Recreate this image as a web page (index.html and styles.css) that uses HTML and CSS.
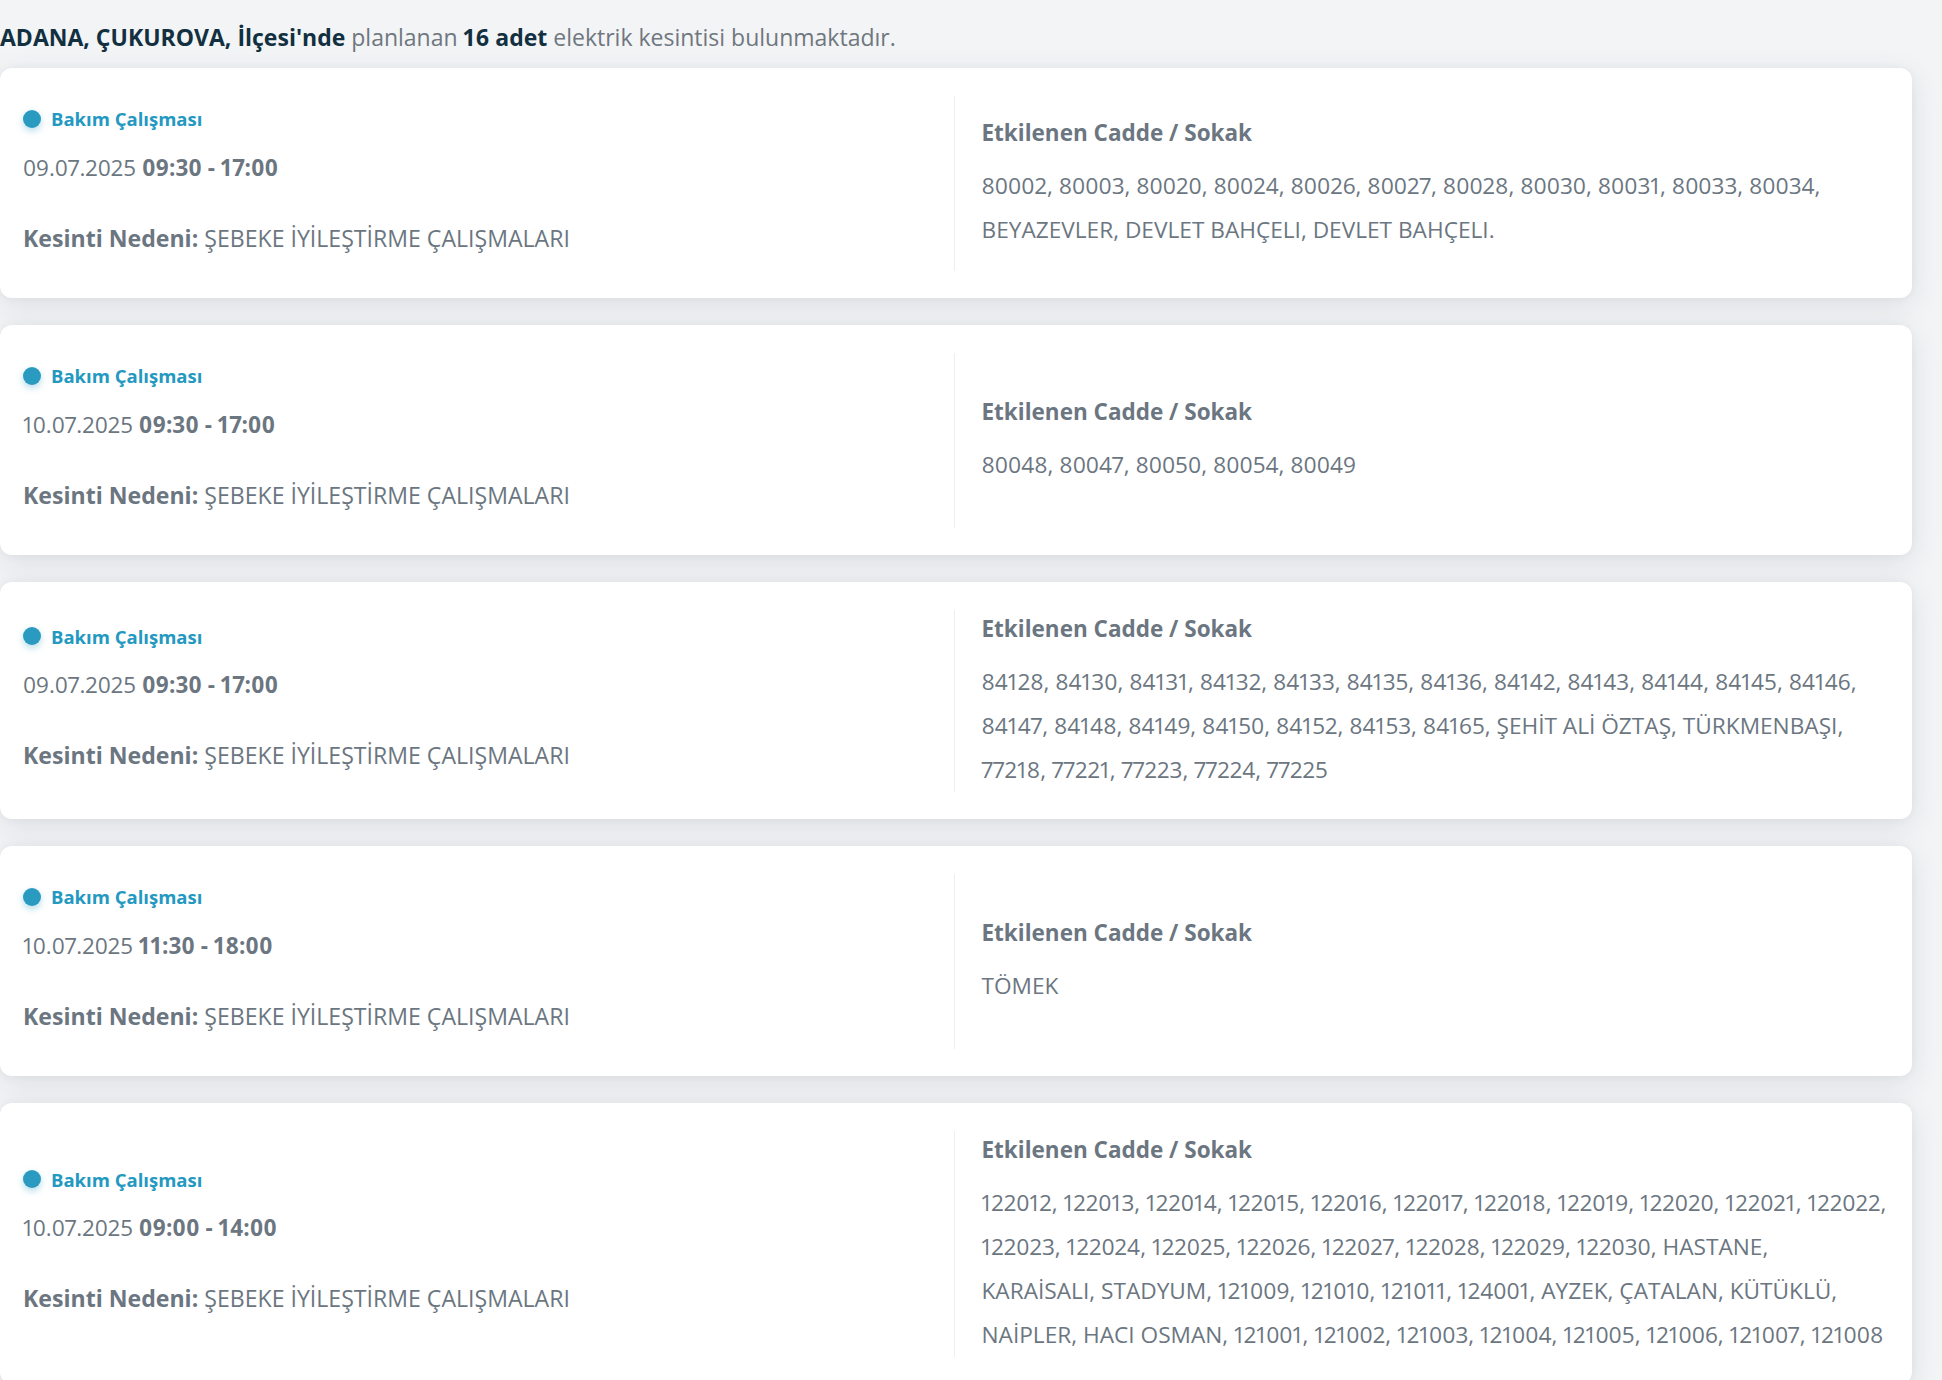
FILE: index.html
```html
<!DOCTYPE html>
<html lang="tr">
<head>
<meta charset="utf-8">
<title>Planlı Kesintiler</title>
<link rel="stylesheet" href="styles.css">
</head>
<body>
<main class="page">
  <p class="summary"><strong>ADANA, ÇUKUROVA, İlçesi'nde</strong> planlanan <strong>16 adet</strong> elektrik kesintisi bulunmaktadır.</p>

  <section class="outage-list">
    <article class="outage-card">
      <div class="outage-info">
        <div class="outage-type"><span class="dot"></span>Bakım Çalışması</div>
        <div class="outage-date">09.07.2025 <strong>09:30 - 17:00</strong></div>
        <div class="outage-reason"><strong>Kesinti Nedeni:</strong> ŞEBEKE İYİLEŞTİRME ÇALIŞMALARI</div>
      </div>
      <div class="outage-streets">
        <h3 class="streets-title">Etkilenen Cadde / Sokak</h3>
        <p class="streets-text">80002, 80003, 80020, 80024, 80026, 80027, 80028, 80030, 80031, 80033, 80034, BEYAZEVLER, DEVLET BAHÇELI, DEVLET BAHÇELI.</p>
      </div>
    </article>

    <article class="outage-card">
      <div class="outage-info">
        <div class="outage-type"><span class="dot"></span>Bakım Çalışması</div>
        <div class="outage-date">10.07.2025 <strong>09:30 - 17:00</strong></div>
        <div class="outage-reason"><strong>Kesinti Nedeni:</strong> ŞEBEKE İYİLEŞTİRME ÇALIŞMALARI</div>
      </div>
      <div class="outage-streets">
        <h3 class="streets-title">Etkilenen Cadde / Sokak</h3>
        <p class="streets-text">80048, 80047, 80050, 80054, 80049</p>
      </div>
    </article>

    <article class="outage-card">
      <div class="outage-info">
        <div class="outage-type"><span class="dot"></span>Bakım Çalışması</div>
        <div class="outage-date">09.07.2025 <strong>09:30 - 17:00</strong></div>
        <div class="outage-reason"><strong>Kesinti Nedeni:</strong> ŞEBEKE İYİLEŞTİRME ÇALIŞMALARI</div>
      </div>
      <div class="outage-streets">
        <h3 class="streets-title">Etkilenen Cadde / Sokak</h3>
        <p class="streets-text">84128, 84130, 84131, 84132, 84133, 84135, 84136, 84142, 84143, 84144, 84145, 84146, 84147, 84148, 84149, 84150, 84152, 84153, 84165, ŞEHİT ALİ ÖZTAŞ, TÜRKMENBAŞI, 77218, 77221, 77223, 77224, 77225</p>
      </div>
    </article>

    <article class="outage-card">
      <div class="outage-info">
        <div class="outage-type"><span class="dot"></span>Bakım Çalışması</div>
        <div class="outage-date">10.07.2025 <strong>11:30 - 18:00</strong></div>
        <div class="outage-reason"><strong>Kesinti Nedeni:</strong> ŞEBEKE İYİLEŞTİRME ÇALIŞMALARI</div>
      </div>
      <div class="outage-streets">
        <h3 class="streets-title">Etkilenen Cadde / Sokak</h3>
        <p class="streets-text">TÖMEK</p>
      </div>
    </article>

    <article class="outage-card">
      <div class="outage-info">
        <div class="outage-type"><span class="dot"></span>Bakım Çalışması</div>
        <div class="outage-date">10.07.2025 <strong>09:00 - 14:00</strong></div>
        <div class="outage-reason"><strong>Kesinti Nedeni:</strong> ŞEBEKE İYİLEŞTİRME ÇALIŞMALARI</div>
      </div>
      <div class="outage-streets">
        <h3 class="streets-title">Etkilenen Cadde / Sokak</h3>
        <p class="streets-text">122012, 122013, 122014, 122015, 122016, 122017, 122018, 122019, 122020, 122021, 122022, 122023, 122024, 122025, 122026, 122027, 122028, 122029, 122030, HASTANE, KARAİSALI, STADYUM, 121009, 121010, 121011, 124001, AYZEK, ÇATALAN, KÜTÜKLÜ, NAİPLER, HACI OSMAN, 121001, 121002, 121003, 121004, 121005, 121006, 121007, 121008</p>
      </div>
    </article>
  </section>
</main>
</body>
</html>
```
FILE: styles.css
```css
html, body {
  margin: 0;
  padding: 0;
}

body {
  background: #f3f4f6;
  font-family: "Open Sans", "Noto Sans", sans-serif;
  font-feature-settings: "pnum" 1;
  color: #6b7681;
  overflow: hidden;
}

.page {
  width: 1912px;
}

.summary {
  margin: 0;
  padding: 22px 0 16px 0;
  font-size: 23px;
  line-height: 30px;
  color: #6f7780;
  white-space: nowrap;
}

.summary strong {
  color: #12303f;
  font-weight: 700;
}

.outage-list {
  display: flex;
  flex-direction: column;
  gap: 27px;
}

.outage-card {
  display: grid;
  grid-template-columns: 931px 1fr;
  padding: 27.5px 23px;
  background: #ffffff;
  border-radius: 12px;
  box-shadow: 0 8px 30px rgba(30, 40, 60, 0.10), 0 0 10px rgba(30, 40, 60, 0.04);
}

.outage-info {
  align-self: center;
  padding: 8px 0 17px 0;
}

.outage-type {
  display: flex;
  align-items: center;
  height: 30px;
  font-size: 18.5px;
  font-weight: 700;
  color: #2399c1;
}

.dot {
  flex: none;
  width: 18px;
  height: 18px;
  border-radius: 50%;
  background: #2a9ac0;
  margin-right: 10px;
  box-shadow: 0 3px 7px rgba(42, 154, 192, 0.35);
}

.outage-date {
  margin-top: 18px;
  font-size: 22.5px;
  line-height: 32px;
}

.outage-reason {
  margin-top: 38px;
  font-size: 23.1px;
  line-height: 32px;
}

.outage-date strong,
.outage-reason strong {
  font-weight: 700;
}

.outage-streets {
  display: flex;
  flex-direction: column;
  justify-content: center;
  border-left: 1px solid #eceef1;
  padding-left: 26.5px;
}

.streets-title {
  margin: 0 0 12px 0;
  font-size: 22.5px;
  line-height: 38px;
  font-weight: 700;
  color: #6b7681;
}

.streets-text {
  margin: 0;
  max-width: 905.5px;
  font-size: 22.67px;
  line-height: 44px;
}
```
